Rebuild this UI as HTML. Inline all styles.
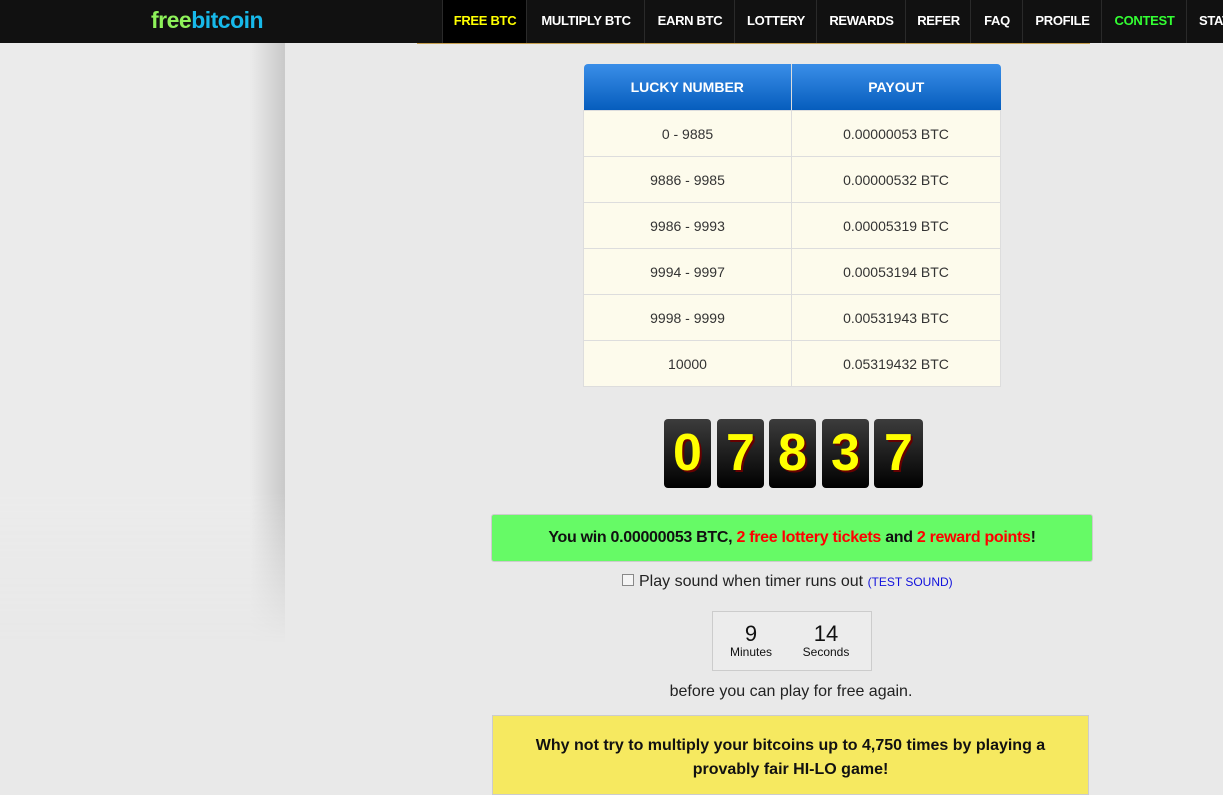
<!DOCTYPE html><html><head><style>
body{margin:0;width:1223px;height:790px;overflow:hidden;background:#e9e9e9;font-family:"Liberation Sans",sans-serif;position:relative}
.nav{position:absolute;left:0;top:0;width:1223px;height:43px;background:#111}
.logo{position:absolute;left:151px;top:7px;font-size:23px;font-weight:bold;letter-spacing:-0.5px}
.nav a{position:absolute;top:0;height:43px;line-height:41px;color:#fff;font-weight:bold;font-size:13px;text-align:center;border-left:1px solid #2a2a2a;letter-spacing:-0.3px}
.left{position:absolute;left:0;top:43px;width:285px;height:600px;background:linear-gradient(90deg,#ebebeb 0,#ebebeb 250px,#c9c9c9 285px);-webkit-mask-image:linear-gradient(#000 75%,transparent);}
table{position:absolute;left:583px;top:64px;width:417px;border-collapse:collapse;font-size:14px;color:#333;table-layout:fixed}
th{height:46px;padding:0;color:#fff;background:linear-gradient(#3a8ee8,#065dbd);font-size:14px;border-right:1px solid #ddd}
td{height:45px;padding:0;background:#fdfbec;text-align:center;border:1px solid #ddd}
.d{position:absolute;top:419px;width:47px;height:69px;border-radius:4px;background:linear-gradient(#3c3c3c,#000);color:#ff0;font-weight:bold;font-size:52px;text-align:center;line-height:69px;text-shadow:2px 2px 0 #600}
.win{position:absolute;left:491px;top:514px;width:600px;height:46px;background:#66fa66;border:1px solid #ccc;border-radius:3px;text-align:center;line-height:46px;font-weight:bold;font-size:16px;color:#111;letter-spacing:-0.3px}
.r{color:#f00}
</style></head><body>
<div class="nav">
<div class="logo"><span style="color:#8ef25a">free</span><span style="color:#17b9ea">bitcoin</span></div>
<a style="left:442px;width:84px;background:#000;color:#ff0">FREE BTC</a>
<a style="left:526px;width:118px">MULTIPLY BTC</a>
<a style="left:644px;width:90px">EARN BTC</a>
<a style="left:734px;width:82px">LOTTERY</a>
<a style="left:816px;width:89px">REWARDS</a>
<a style="left:905px;width:65px">REFER</a>
<a style="left:970px;width:52px">FAQ</a>
<a style="left:1022px;width:79px">PROFILE</a>
<a style="left:1101px;width:85px;color:#3f3">CONTEST</a>
<a style="left:1186px;width:60px;text-align:left;padding-left:12px">STATS</a>
</div>
<div style="position:absolute;left:417px;top:43px;width:673px;height:1px;background:#c8a050"></div>
<div class="left"></div>
<table>
<colgroup><col style="width:208px"><col style="width:209px"></colgroup>
<tr><th style="border-radius:4px 0 0 0">LUCKY NUMBER</th><th style="border-radius:0 4px 0 0;border-right:0">PAYOUT</th></tr>
<tr><td>0 - 9885</td><td>0.00000053 BTC</td></tr>
<tr><td>9886 - 9985</td><td>0.00000532 BTC</td></tr>
<tr><td>9986 - 9993</td><td>0.00005319 BTC</td></tr>
<tr><td>9994 - 9997</td><td>0.00053194 BTC</td></tr>
<tr><td>9998 - 9999</td><td>0.00531943 BTC</td></tr>
<tr><td>10000</td><td>0.05319432 BTC</td></tr>
</table>
<div class="d" style="left:664px">0</div><div class="d" style="left:717px">7</div><div class="d" style="left:769px">8</div><div class="d" style="left:822px">3</div><div class="d" style="left:874px;width:49px">7</div>
<div class="win">You win 0.00000053 BTC, <span class="r">2 free lottery tickets</span> and <span class="r">2 reward points</span>!</div>
<div style="position:absolute;left:622px;top:573px;font-size:16px;color:#222"><span style="display:inline-block;width:10px;height:10px;border:1px solid #888;background:#f4f4f4;margin-right:5px"></span>Play sound when timer runs out <span style="font-size:12px;color:#11d">(TEST SOUND)</span></div>
<div style="position:absolute;left:712px;top:611px;width:158px;height:58px;border:1px solid #ccc;background:#ececec;color:#111">
<div style="position:absolute;left:14px;top:10px;width:48px;text-align:center;font-size:22px;line-height:24px">9<div style="font-size:12px;line-height:12px">Minutes</div></div>
<div style="position:absolute;left:88px;top:10px;width:50px;text-align:center;font-size:22px;line-height:24px">14<div style="font-size:12px;line-height:12px">Seconds</div></div>
</div>
<div style="position:absolute;left:491px;top:683px;width:600px;text-align:center;font-size:16px;color:#222">before you can play for free again.</div>
<div style="position:absolute;left:492px;top:715px;width:597px;height:80px;background:#f6e960;border:1px solid #ccc;text-align:center;font-weight:bold;font-size:16px;line-height:24px;color:#111;padding-top:18px;box-sizing:border-box">Why not try to multiply your bitcoins up to 4,750 times by playing a<br>provably fair HI-LO game!</div>
</body></html>
